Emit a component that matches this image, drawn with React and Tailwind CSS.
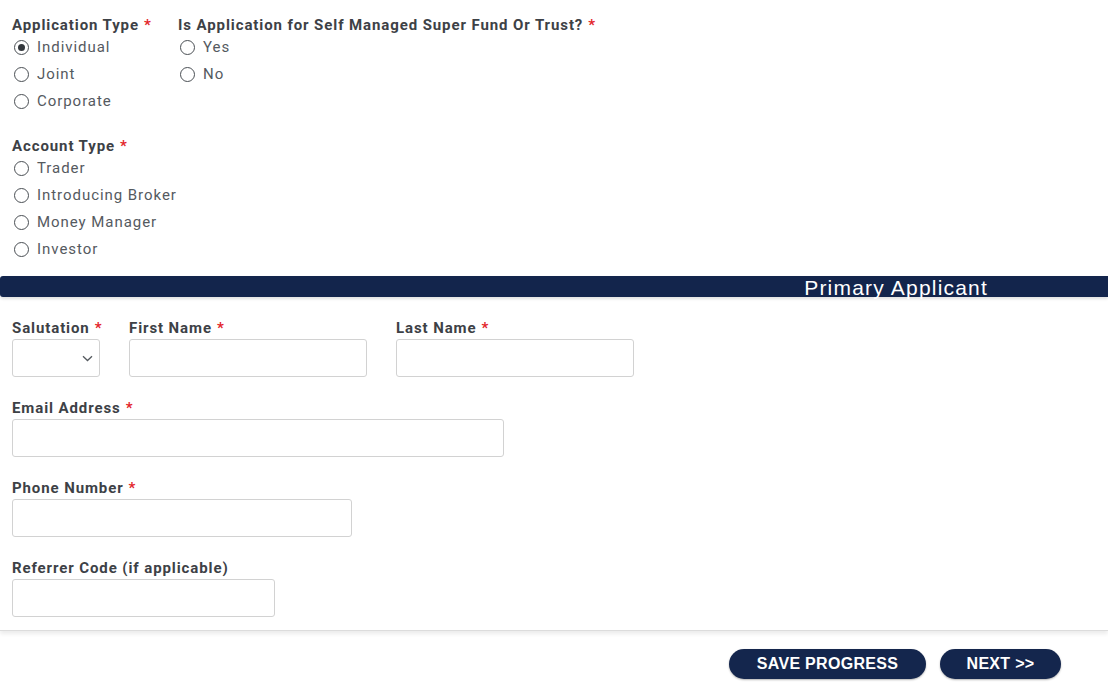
import React, { useState } from "react";

const Req = () => <span className="ml-[5px] text-[#e3262b]">*</span>;

const Label = ({ children, required }) => (
  <div className="h-[18px] text-[15px] leading-[18px] font-bold tracking-[0.9px] text-[#3d4146] whitespace-nowrap">
    {children}
    {required && <Req />}
  </div>
);

const Radio = ({ label, checked, onClick }) => (
  <div className="flex h-[27px] items-center cursor-pointer" onClick={onClick}>
    <span className="ml-[2px] mr-[8px] flex h-[15px] w-[15px] items-center justify-center rounded-full border border-[#4a4f54]">
      {checked && <span className="h-[7px] w-[7px] rounded-full bg-[#33383d]" />}
    </span>
    <span className="text-[15px] tracking-[0.95px] text-[#555a5f]">{label}</span>
  </div>
);

const RadioGroup = ({ title, options, value, onChange }) => (
  <div>
    <Label required>{title}</Label>
    {options.map((o) => (
      <Radio key={o} label={o} checked={value === o} onClick={() => onChange(o)} />
    ))}
  </div>
);

const Field = ({ label, required, width }) => (
  <div>
    <Label required={required}>{label}</Label>
    <input
      type="text"
      className={`mt-[2px] block h-[38px] rounded-[3px] border border-[#d2d2d2] bg-white px-2 text-[15px] outline-none ${width}`}
    />
  </div>
);

const App = () => {
  const [appType, setAppType] = useState("Individual");
  const [smsf, setSmsf] = useState(null);
  const [accountType, setAccountType] = useState(null);

  return (
    <div className="min-h-screen bg-white font-['Roboto',sans-serif]">
      <div className="border-b border-[#dcdcdc] pb-[13px] shadow-[0_3px_4px_rgba(0,0,0,0.08)]">
        {/* application + account type */}
        <div className="px-3 pt-4">
          <div className="flex">
            <div className="w-[166px]">
              <RadioGroup
                title="Application Type"
                options={["Individual", "Joint", "Corporate"]}
                value={appType}
                onChange={setAppType}
              />
            </div>
            <RadioGroup
              title="Is Application for Self Managed Super Fund Or Trust?"
              options={["Yes", "No"]}
              value={smsf}
              onChange={setSmsf}
            />
          </div>
          <div className="mt-[22px]">
            <RadioGroup
              title="Account Type"
              options={["Trader", "Introducing Broker", "Money Manager", "Investor"]}
              value={accountType}
              onChange={setAccountType}
            />
          </div>
        </div>

        {/* section heading */}
        <div className="mt-[13px] flex h-[21px] items-center justify-end rounded-l-[3px] bg-[#13254c] pr-[120px] shadow-[0_2px_3px_rgba(0,0,0,0.12)]">
          <span className="pt-[2px] font-['Liberation_Sans',Arial,sans-serif] text-[21px] leading-none tracking-[1.2px] text-white">
            Primary Applicant
          </span>
        </div>

        {/* applicant details */}
        <div className="px-3 pt-[22px]">
          <div className="flex">
            <div className="w-[117px]">
              <Label required>Salutation</Label>
              <div className="mt-[2px] flex h-[38px] w-[88px] items-center justify-end rounded-[3px] border border-[#d2d2d2] pr-[6px]">
                <svg width="11" height="7" viewBox="0 0 11 7" fill="none">
                  <path d="M1 1.2l4.5 4.3L10 1.2" stroke="#555a5f" strokeWidth="1.3" />
                </svg>
              </div>
            </div>
            <div className="w-[267px]">
              <Field label="First Name" required width="w-[238px]" />
            </div>
            <Field label="Last Name" required width="w-[238px]" />
          </div>
          <div className="mt-[22px]">
            <Field label="Email Address" required width="w-[492px]" />
          </div>
          <div className="mt-[22px]">
            <Field label="Phone Number" required width="w-[340px]" />
          </div>
          <div className="mt-[22px]">
            <Field label="Referrer Code (if applicable)" width="w-[263px]" />
          </div>
        </div>
      </div>

      <div className="flex justify-end gap-[14px] pr-[47px] pt-[18px]">
        <button className="h-[30px] w-[197px] rounded-full bg-[#14264d] font-['Liberation_Sans',Arial,sans-serif] text-[16px] font-bold tracking-[0.3px] text-white shadow-[0_1px_2px_rgba(0,0,0,0.3)]">
          SAVE PROGRESS
        </button>
        <button className="h-[30px] w-[121px] rounded-full bg-[#14264d] font-['Liberation_Sans',Arial,sans-serif] text-[16px] font-bold tracking-[0.3px] text-white shadow-[0_1px_2px_rgba(0,0,0,0.3)]">
          NEXT &gt;&gt;
        </button>
      </div>
    </div>
  );
};

export default App;
